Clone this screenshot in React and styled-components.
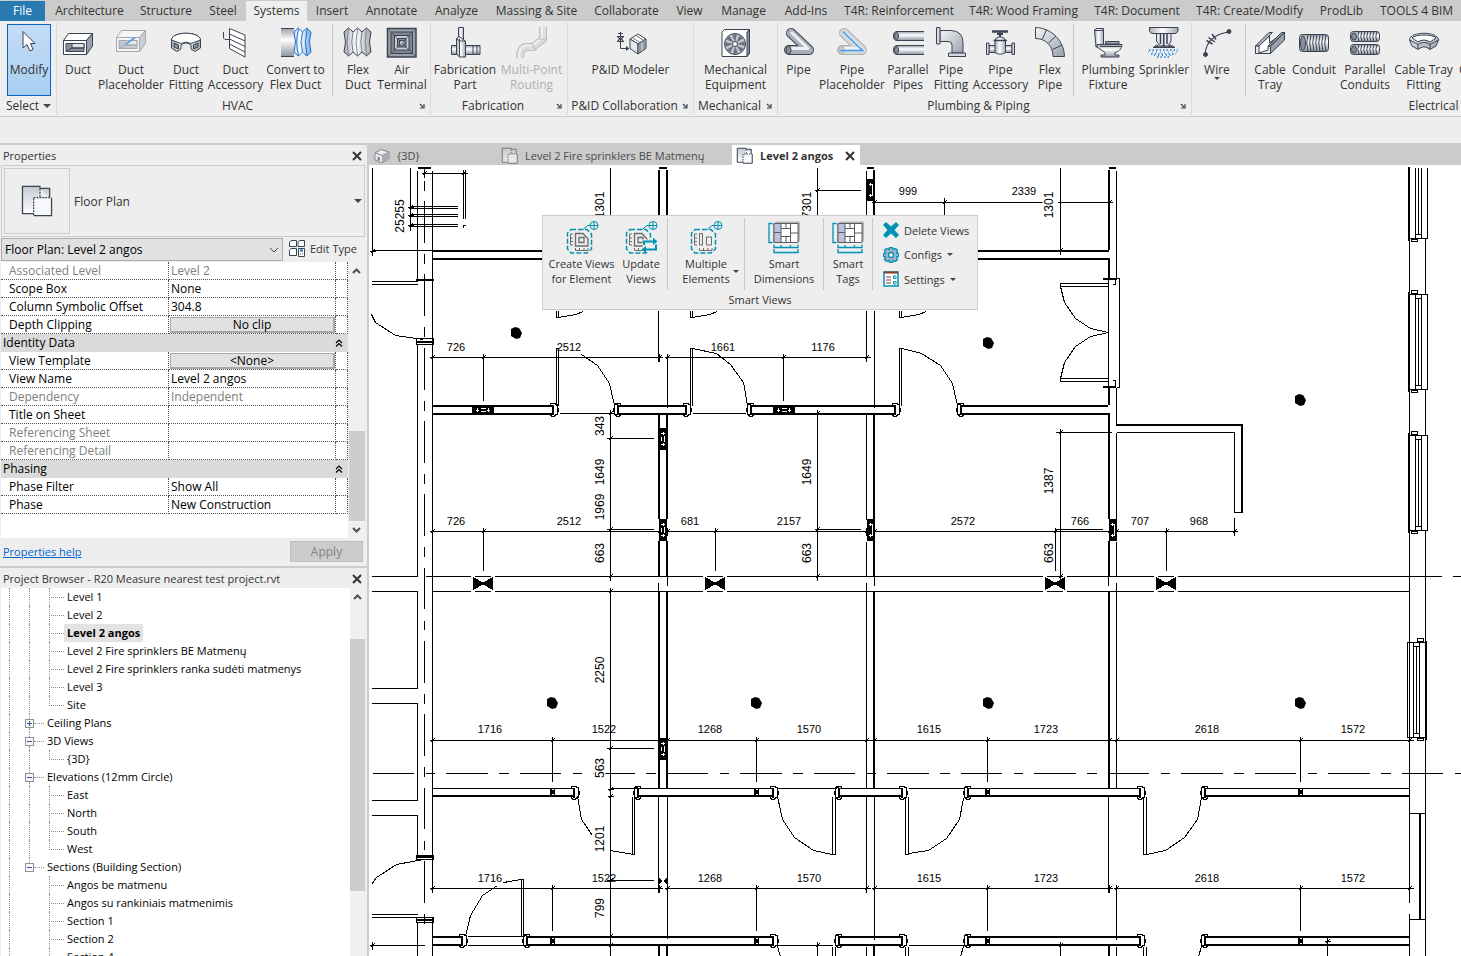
import React, { useState } from 'react';
import styled, { createGlobalStyle, css } from 'styled-components';

const theme = {
    font: '"Open Sans", "Noto Sans", sans-serif',
    chrome: '#eeeeee',
    strip: '#cbcbcb',
    line: '#cccccc',
    ink: '#3b4352',
    text: '#333333',
    muted: '#808080',
    teal: '#0092b3',
    blue: '#0a63c2',
}

const RIBBON_TABS = [
    { label: 'Architecture', width: 85 },
    { label: 'Structure', width: 68 },
    { label: 'Steel', width: 46 },
    { label: 'Systems', width: 61 },
    { label: 'Insert', width: 50 },
    { label: 'Annotate', width: 69 },
    { label: 'Analyze', width: 61 },
    { label: 'Massing & Site', width: 99 },
    { label: 'Collaborate', width: 81 },
    { label: 'View', width: 45 },
    { label: 'Manage', width: 63 },
    { label: 'Add-Ins', width: 62 },
    { label: 'T4R: Reinforcement', width: 124 },
    { label: 'T4R: Wood Framing', width: 125 },
    { label: 'T4R: Document', width: 102 },
    { label: 'T4R: Create/Modify', width: 123 },
    { label: 'ProdLib', width: 61 },
    { label: 'TOOLS 4 BIM', width: 89 },
]

const RIBBON_PANELS = [
    {
        title: 'HVAC',
        width: 374,
        tools: [
            { label: ['Duct'], icon: 'duct', width: 42 },
            { label: ['Duct', 'Placeholder'], icon: 'ductPlaceholder', width: 64 },
            { label: ['Duct', 'Fitting'], icon: 'ductFitting', width: 46 },
            { label: ['Duct', 'Accessory'], icon: 'ductAccessory', width: 53 },
            { label: ['Convert to', 'Flex Duct'], icon: 'convert', width: 67 },
            { separator: true },
            { label: ['Flex', 'Duct'], icon: 'flexDuct', width: 44 },
            { label: ['Air', 'Terminal'], icon: 'airTerminal', width: 44 },
        ],
    },
    {
        title: 'Fabrication',
        width: 137,
        tools: [
            { label: ['Fabrication', 'Part'], icon: 'fabrication', width: 68 },
            { label: ['Multi-Point', 'Routing'], icon: 'multiPoint', width: 65, disabled: true },
        ],
    },
    {
        title: 'P&ID Collaboration',
        width: 126,
        tools: [{ label: ['P&ID Modeler'], icon: 'pidModeler', width: 125 }],
    },
    {
        title: 'Mechanical',
        width: 84,
        tools: [{ label: ['Mechanical', 'Equipment'], icon: 'mechanical', width: 83 }],
    },
    {
        title: 'Plumbing & Piping',
        width: 414,
        tools: [
            { label: ['Pipe'], icon: 'pipe', width: 41 },
            { label: ['Pipe', 'Placeholder'], icon: 'pipePlaceholder', width: 66 },
            { label: ['Parallel', 'Pipes'], icon: 'parallelPipes', width: 46 },
            { label: ['Pipe', 'Fitting'], icon: 'pipeFitting', width: 40 },
            { label: ['Pipe', 'Accessory'], icon: 'pipeAccessory', width: 59 },
            { label: ['Flex', 'Pipe'], icon: 'flexPipe', width: 40 },
            { separator: true },
            { label: ['Plumbing', 'Fixture'], icon: 'plumbing', width: 62 },
            { label: ['Sprinkler'], icon: 'sprinkler', width: 50 },
        ],
    },
    {
        title: 'Electrical',
        width: 496,
        tools: [
            { label: ['Wire'], icon: 'wire', width: 50, menu: 'below' },
            { separator: true },
            { label: ['Cable', 'Tray'], icon: 'cableTray', width: 42 },
            { label: ['Conduit'], icon: 'conduit', width: 46 },
            { label: ['Parallel', 'Conduits'], icon: 'parallelConduits', width: 56 },
            { label: ['Cable Tray', 'Fitting'], icon: 'cableTrayFitting', width: 61 },
            { label: ['Conduit', 'Fitting'], icon: 'conduitFitting', width: 54 },
        ],
    },
]

const SMART_TOOLS = [
    { label: ['Create Views', 'for Element'], icon: 'createViews', width: 73 },
    { label: ['Update', 'Views'], icon: 'updateViews', width: 46 },
    { separator: true },
    { label: ['Multiple', 'Elements'], icon: 'multipleElements', width: 70, menu: 'side' },
    { separator: true },
    { label: ['Smart', 'Dimensions'], icon: 'smartGrid', width: 72 },
    { separator: true },
    { label: ['Smart', 'Tags'], icon: 'smartGrid', width: 42 },
    { separator: true },
]

const PROPERTIES = [
    { name: 'Associated Level', value: 'Level 2', readOnly: true },
    { name: 'Scope Box', value: 'None' },
    { name: 'Column Symbolic Offset', value: '304.8' },
    { name: 'Depth Clipping', value: 'No clip', button: true },
    { section: 'Identity Data' },
    { name: 'View Template', value: '<None>', button: true },
    { name: 'View Name', value: 'Level 2 angos' },
    { name: 'Dependency', value: 'Independent', readOnly: true },
    { name: 'Title on Sheet', value: '' },
    { name: 'Referencing Sheet', value: '', readOnly: true },
    { name: 'Referencing Detail', value: '', readOnly: true },
    { section: 'Phasing' },
    { name: 'Phase Filter', value: 'Show All' },
    { name: 'Phase', value: 'New Construction' },
]

const TREE = [
    { label: 'Level 1' },
    { label: 'Level 2' },
    { label: 'Level 2 angos', selected: true },
    { label: 'Level 2 Fire sprinklers BE Matmenų' },
    { label: 'Level 2 Fire sprinklers ranka sudėti matmenys' },
    { label: 'Level 3' },
    { label: 'Site', last: true },
    { label: 'Ceiling Plans', node: 'closed' },
    { label: '3D Views', node: 'open' },
    { label: '{3D}', last: true },
    { label: 'Elevations (12mm Circle)', node: 'open' },
    { label: 'East' },
    { label: 'North' },
    { label: 'South' },
    { label: 'West', last: true },
    { label: 'Sections (Building Section)', node: 'open', last: true },
    { label: 'Angos be matmenu', tail: true },
    { label: 'Angos su rankiniais matmenimis', tail: true },
    { label: 'Section 1', tail: true },
    { label: 'Section 2', tail: true },
    { label: 'Section 4', tail: true },
]

/* ---------- icons ---------- */

const Gradients = () => (
    <HiddenDefs aria-hidden="true">
        <defs>
            <linearGradient id="metalV" x1="0" y1="0" x2="0" y2="1">
                <stop offset="0" stopColor="#9ba1ac" />
                <stop offset=".4" stopColor="#ffffff" />
                <stop offset="1" stopColor="#8d94a1" />
            </linearGradient>
            <linearGradient id="metalH" x1="0" y1="0" x2="1" y2="0">
                <stop offset="0" stopColor="#a9aeb8" />
                <stop offset=".45" stopColor="#ffffff" />
                <stop offset="1" stopColor="#a2a8b3" />
            </linearGradient>
            <linearGradient id="fade" x1="0" y1="0" x2="0" y2="1">
                <stop offset="0" stopColor="#c3c8d2" />
                <stop offset="1" stopColor="#ffffff" />
            </linearGradient>
            <linearGradient id="steel" x1="0" y1="0" x2="1" y2="1">
                <stop offset="0" stopColor="#f4f5f7" />
                <stop offset="1" stopColor="#9aa1ad" />
            </linearGradient>
            <linearGradient id="blueH" x1="0" y1="0" x2="1" y2="0">
                <stop offset="0" stopColor="#cfe3fa" />
                <stop offset=".4" stopColor="#ffffff" />
                <stop offset="1" stopColor="#6fa9e6" />
            </linearGradient>
        </defs>
    </HiddenDefs>
)

const ductShape = (
    <>
        <path d="M1.5 13.5L6.5 6.5H30.5L24.5 13.5Z" fill="#fff" />
        <path d="M24.5 13.5L30.5 6.5V19L24.5 27.5Z" fill="#9aa1ad" />
        <path d="M1.5 13.5H24.5V27.5H1.5Z" fill="#fff" />
        <path d="M4 16.5H22V24.5H4Z" fill="#8a919d" />
        <path d="M10 16.5H22V21H10Z" fill="#dfe2e7" />
        <path d="M4 24.5L10 21H22" />
    </>
)

const pipeShape = (
    <>
        <path d="M8 6L26 23H6" stroke="#3b4352" strokeWidth="10" strokeLinejoin="round" strokeLinecap="round" />
        <path d="M8 6L26 23H6" stroke="#a9afba" strokeWidth="8" strokeLinejoin="round" strokeLinecap="round" />
        <path d="M8 5L25 21.5H8" stroke="#eef0f3" strokeWidth="3" strokeLinejoin="round" />
        <ellipse cx="5.5" cy="23" rx="2.5" ry="4" fill="#8a919d" />
    </>
)

const straightPipe = (y) => (
    <>
        <path d={`M32 ${y}H5Q1.5 ${y} 1.5 ${y + 4.5}T5 ${y + 9}H32`} fill="url(#metalV)" />
        <ellipse cx="4.5" cy={y + 4.5} rx="2" ry="3.5" fill="#8a919d" />
    </>
)

const coil = (y, h) => (
    <>
        <rect x="1.5" y={y} width="29" height={h} rx="3" fill="url(#metalV)" />
        <ellipse cx="5" cy={y + h / 2} rx="2.5" ry={h / 2 - 1.5} fill="#8a919d" />
        {[10, 13, 16, 19, 22, 25, 28].map((x) => (
            <path key={x} d={`M${x} ${y}q-2.5 ${h / 2} 0 ${h}`} />
        ))}
    </>
)

const viewFrame = (
    <>
        <path d="M5 8.5H21L25.5 13V28L21 32H5L1.5 28V12Z" stroke={theme.teal} strokeWidth="1.5" strokeDasharray="5 2" />
        <path d="M17 8.5L22 4.5H24" stroke={theme.teal} />
        <circle cx="28" cy="4.5" r="4" stroke={theme.teal} />
        <path d="M24 4.5H32M28 .5V8.5" stroke={theme.teal} />
    </>
)

const ladder = (
    <g stroke="#6b6b6b">
        <path d="M7 13H4.5V24H7M4.5 17H7M4.5 20.5H7" />
        <path d="M9.5 27V29.5H22V27M13.5 27V29.5M18 27V29.5" />
    </g>
)

const room = (
    <g stroke="#6b6b6b" strokeWidth="1.3">
        <path d="M9.5 12.5H17L22 18V25H9.5Z" />
        <path d="M13 16.5H18V21.5H13Z" />
    </g>
)

const zigzag = (x, n, w) => {
    let top = ''
    let bottom = ''
    for (let i = 1; i <= n; i++) {
        top += `l${w / 2} -4l${w / 2} 4`
        bottom += `l${-w / 2} 4l${-w / 2} -4`
    }
    return `M${x} 5${top}q-3 10 0 20${bottom}q3 -10 0 -20Z`
}

const ICONS = {
    duct: ductShape,
    ductPlaceholder: (
        <g transform="translate(0 -3)">
            <g opacity=".4">{ductShape}</g>
            <path d="M11 20L20 13.5" stroke="#58a6ee" strokeWidth="2" />
        </g>
    ),
    ductFitting: (
        <>
            <path d="M1.5 13C2 4 30 4 30.5 13V21L25 24.5L21 22V18Q16 14 11 18V22L7 24.5L1.5 21Z" fill="url(#metalH)" />
            <path d="M1.5 13C2 4 30 4 30.5 13L21 16.5Q16 13.5 11 16.5Z" fill="#fff" />
            <path d="M4 16L8.5 18V22L4 20Z" fill="#8a919d" />
            <path d="M28 16L23.5 18V22L28 20Z" fill="#8a919d" />
        </>
    ),
    ductAccessory: (
        <>
            <path d="M9.5 1.5L25 8V30L9.5 21.5Z" fill="#fff" />
            <path d="M9.5 7L25 14M9.5 12L25 19.5M9.5 17L25 25M3.5 5V11L5 12.5H9" />
        </>
    ),
    convert: (
        <>
            <path d="M1 1.5H14V29.5H1Z" fill="url(#metalV)" stroke="none" />
            <path d="M14 1.5H1M1 29.5H14" />
            <g stroke="#1d6fc9">
                <path d={zigzag(14, 2, 8.5)} fill="url(#blueH)" />
                <path d="M18.5 2Q15 15 18.5 29M22.5 5Q19.5 15 22.5 25M27 2Q24 15 27 29" />
            </g>
        </>
    ),
    flexDuct: (
        <>
            <path d={zigzag(2, 3, 9)} fill="url(#metalH)" />
            <path d="M6.5 2Q3.5 15 6.5 29M11 5Q8.5 15 11 25M15.5 2Q12.5 15 15.5 29M20 5Q17.5 15 20 25M24.5 2Q22 15 24.5 29" stroke="#7a818e" />
        </>
    ),
    airTerminal: (
        <>
            <path d="M1.5 1.5H30V30H1.5Z" fill="#9aa1ad" strokeWidth="1.5" />
            <path d="M5 5H26.5V26.5H5Z" fill="#7d8592" />
            <path d="M8.5 8.5H23V23H8.5Z" fill="#c9cdd4" />
            <path d="M11.5 11.5H20V20H11.5Z" fill="#8a919d" />
            <path d="M13.5 13.5H18V18H13.5Z" fill="#fff" />
            <path d="M1.5 1.5L30 30M30 1.5L1.5 30" strokeWidth=".7" />
        </>
    ),
    fabrication: (
        <>
            <path d="M2.5 18.5H31V27.5H2.5Z" fill="url(#metalV)" />
            <path d="M9.5 .5H14.5V20H9.5Z" fill="url(#metalH)" />
            <path d="M7.5 11.5L10 9.5L16.5 14V30H10.5L7.5 27Z" fill="url(#metalH)" />
            <path d="M10.5 12V30M24 18.5V27.5M28 18.5V27.5M7.5 11.5L10.5 14H16" />
        </>
    ),
    multiPoint: (
        <g strokeLinejoin="round">
            <path d="M27 0V12L17 20H10Q4 21 4 31" stroke="#bdbdbd" strokeWidth="8" />
            <path d="M27 0V12L17 20H10Q4 21 4 31" stroke="#dcdcdc" strokeWidth="6" />
            <path d="M26 0V11L16 18.5H9Q3 20 3 31" stroke="#efefef" strokeWidth="2" />
            <path d="M23 12L31 13M16 16L20 24" stroke="#bdbdbd" />
        </g>
    ),
    pidModeler: (
        <>
            <path d="M5.5 5V21.5H12M2 9.5L9 14.5H2L9 9.5ZM3 6.5H8M3 12H8" />
            <path d="M11 19L14.5 21.5L11 24Z" fill="#3b4352" stroke="none" />
            <path d="M15 12L23 7L31 12L23 17Z" fill="#fff" />
            <path d="M15 12L23 17V27L15 21.5Z" fill="#e6e8ec" />
            <path d="M31 12L23 17V27L31 21.5Z" fill="#b9bec8" />
            <path d="M17 10.5L25 15.5V26M21 8.5L29 13.5V23" stroke="#6b7280" />
        </>
    ),
    mechanical: (
        <>
            <path d="M2 5L4.5 2.5H29.5V26L27 29.5H2Z" fill="#fff" />
            <path d="M27 5V29.5L29.5 26V2.5Z" fill="#8a919d" />
            <circle cx="15" cy="17" r="10.5" fill="#c3c8d0" />
            {[0, 45, 90, 135, 180, 225, 270, 315].map((a) => (
                <path key={a} d="M15 15L12 7.5L17 7Z" fill="#6c7482" stroke="none" transform={`rotate(${a} 15 17)`} />
            ))}
            <circle cx="15" cy="17" r="2.5" fill="#fff" />
        </>
    ),
    pipe: pipeShape,
    pipePlaceholder: (
        <>
            <g opacity=".35">{pipeShape}</g>
            <path d="M7 4.5L26.5 23.5H4" stroke="#3f9bf0" strokeWidth="1.5" />
        </>
    ),
    parallelPipes: <>{straightPipe(4.5)}{straightPipe(18.5)}</>,
    pipeFitting: (
        <>
            <path d="M5 3.5H16Q28 4 28 16V26H17V18Q17 14.5 13 14.5H5Z" fill="url(#steel)" />
            <path d="M1.5 .5H5V17H1.5Z" fill="#d5d8de" />
            <path d="M13.5 26H30.5V29.5H13.5Z" fill="#d5d8de" />
        </>
    ),
    pipeAccessory: (
        <>
            <path d="M7 4.5H23" strokeWidth="2.5" />
            <path d="M15 5V10M12 7H18" strokeWidth="2" />
            <path d="M4 18.5H27V25.5H4Z" fill="url(#metalV)" />
            <path d="M10 25.5V14Q10 10 15 10T20.5 14V25.5Q15 29 10 25.5Z" fill="url(#metalH)" />
            <path d="M8.5 13.5H22" strokeWidth="1.5" />
            <path d="M1.5 16H4V27.5H1.5ZM27 16H29.5V27.5H27Z" fill="#d5d8de" />
        </>
    ),
    flexPipe: (
        <>
            <path d="M1.5 .5C18 1 30 14 30.5 29.5H19C19 19 12 11.5 1.5 11.5Z" fill="url(#steel)" />
            <path d="M12.5 2.5L8.5 12M22 9L14.5 16M28 18L18.5 22.5" />
        </>
    ),
    plumbing: (
        <>
            <path d="M2.5 3L4 1.5H11.5V20H4Z" fill="url(#metalH)" />
            <path d="M2.5 3.5H11.5" />
            <path d="M13.5 14.5H27V17H13.5Z" fill="#9aa1ad" />
            <path d="M5 17.5H30C30 22 26 25 23 25.5V28H27V30H9V28H13V25.5L5 20Z" fill="url(#metalV)" />
            <path d="M8 19.5H29" />
        </>
    ),
    sprinkler: (
        <>
            <path d="M1.5 .5H30V4L28 6.5H3.5L1.5 4Z" fill="url(#metalH)" />
            <path d="M8.5 6.5H23V14L20 19H12L8.5 14Z" fill="#e6e8ec" />
            <path d="M12.5 6.5V17M19 6.5V17M15.75 6.5V19" strokeWidth="1.5" />
            <path d="M5 20.5L9 18L12 20.5L15.5 18L19 20.5L22.5 18L27 20.5Z" fill="#5c6472" />
            <path d="M1 23L30 23M3 27H28M9 30H23" stroke="#1d7fe0" strokeWidth="1.5" strokeDasharray="1.5 2" />
            <path d="M0 25H32M6 28.5H26" stroke="#1d7fe0" strokeDasharray="1 3" />
        </>
    ),
    wire: (
        <>
            <path d="M4 27Q6 8 28 5" stroke="#3b4352" strokeWidth="1.2" />
            <circle cx="4.5" cy="27.5" r="2" fill="#3b4352" />
            <circle cx="28" cy="4.5" r="2" fill="#3b4352" />
            <path d="M5.5 13.5L11.5 17M7.5 10.5L14 15M11 7L15 12.5" strokeWidth="1.5" />
        </>
    ),
    cableTray: (
        <>
            <path d="M1.5 19L15 5.5H18.5L5 19V26.5Z" fill="#b3b9c3" />
            <path d="M5 19L15.5 9V16L26 8L14 26.5H1.5V19H5Z" fill="#fff" />
            <path d="M1.5 19V26.5H16.5V19H14V23L5 26V19Z" fill="#e6e8ec" />
            <path d="M14 19L27.5 5.5H30.5L16.5 19ZM16.5 19L30.5 5.5V13L16.5 26.5Z" fill="#9aa1ad" />
        </>
    ),
    conduit: coil(7.5, 17),
    parallelConduits: <>{coil(4.5, 10)}{coil(17.5, 10)}</>,
    cableTrayFitting: (
        <>
            <path d="M1.5 13C2 4 30 4 30.5 13L28 19L22 22.5Q16 17 10 22.5L4 19Z" fill="url(#steel)" />
            <path d="M4 11C7 7 25 7 28 11L22 15Q16 11 10 15Z" fill="#fff" />
            <path d="M1.5 13L10 17.5Q16 13.5 22 17.5L30.5 13M10 17.5V22M22 17.5V22" />
        </>
    ),
    conduitFitting: <path d="M10 6.5H30V22H10Z" fill="url(#steel)" />,
    createViews: <>{viewFrame}{ladder}{room}</>,
    updateViews: (
        <>
            {viewFrame}{ladder}{room}
            <path d="M17.5 18.5H33V31H17.5Z" fill="#eee" stroke="none" />
            <path d="M19 24V20.5H30M31 23.5V28.5H19" stroke={theme.teal} strokeWidth="2" />
            <path d="M28 16.5L32.5 20.5L28 24ZM21 25L16.5 28.5L21 32Z" fill={theme.teal} stroke="none" />
        </>
    ),
    multipleElements: (
        <>
            {viewFrame}{ladder}
            <path d="M9.5 12.5H12.5V24H9.5ZM16.5 16H21.5V24H16.5Z" stroke="#6b6b6b" />
        </>
    ),
    smartGrid: (
        <>
            <path d="M6 2.5L8 .5H32V20L30 21.5Z" fill="#b5b5b5" stroke="none" />
            <path d="M6 2.5H30V21.5H6Z" fill="#fff" stroke="#5c5c5c" />
            <path d="M6 2.5H13V21.5H6Z" fill="#b9c4e0" stroke="#5c5c5c" />
            <path d="M13 7.5H22.5M6 11.5H13M13 15.5H22.5V2.5M22.5 12H30M18 2.5V7.5M18 15.5V21.5M22.5 15.5V21.5" stroke="#5c5c5c" />
            <path d="M4.5 2.5H1V21.5H4.5M6 23.5V26.5H30V23.5M13 24V26.5M22.5 24V26.5M6 28V31.5H30V28" stroke={theme.teal} strokeWidth="1.3" />
        </>
    ),
}

const Icon = ({ name }) => (
    <IconSvg viewBox="0 0 32 32" aria-hidden="true">{ICONS[name]}</IconSvg>
)

const CloseGlyph = () => (
    <Glyph viewBox="0 0 12 12" $size={12} aria-hidden="true">
        <path d="M2 2L10 10M10 2L2 10" stroke="#333" strokeWidth="2" fill="none" />
    </Glyph>
)

const Launcher = () => (
    <Glyph viewBox="0 0 6 6" $size={6} aria-hidden="true">
        <path d="M1 1L4 4M5 1V5H1" stroke="#3b4352" strokeWidth="1.2" fill="none" />
    </Glyph>
)

const PlanGlyph = ({ size, faded }) => (
    <Glyph viewBox="0 0 32 32" $size={size} aria-hidden="true" opacity={faded ? 0.6 : 1}>
        <g stroke={theme.ink} strokeWidth={size > 20 ? 1.3 : 2}>
            <path d="M18.5 2.5H28.5V12M18.5 2.5V.5H.5V28.5H12" fill="url(#fade)" />
            <path d="M12 12H30.5V30.5H12Z" fill="#f7f8fa" stroke="none" />
            <path d="M30.5 12V30.5H12" fill="none" />
            <path d="M12 30V12H30M18.5 3V12" fill="none" strokeDasharray={size > 20 ? '2 1' : '3 2'} />
        </g>
    </Glyph>
)

const CubeGlyph = () => (
    <Glyph viewBox="0 0 16 16" $size={16} aria-hidden="true">
        <path d="M1 5L7 1.5L15 4V11L8 15L1 12Z" fill="#e9eaec" stroke="#85898f" />
        <path d="M1 5L8.5 7.5L15 4M8.5 7.5V15" fill="none" stroke="#85898f" />
        <path d="M8.5 7.5L15 4V11L8 15Z" fill="#a9adb5" />
        <path d="M3.5 8.5L6 9.500V13L3.5 12Z" fill="#85898f" />
    </Glyph>
)

const EditTypeGlyph = () => (
    <Glyph viewBox="0 0 17 17" $size={17} aria-hidden="true">
        <g fill="#fff" stroke={theme.ink}>
            <path d="M.5 2.5L2 .5H7.5V6.5H.5ZM9 2.5L10.5 .5H15.5V6.5H9ZM.5 10.5L2 8.5H7.5V15.5H.5Z" />
            <path d="M9.5 8.5H15.5V16.5H9.5Z" />
            <path d="M11 10.5H14" stroke={theme.blue} strokeWidth="2" />
            <path d="M11 14H12M13 14H14" />
        </g>
    </Glyph>
)

const MENU_ICONS = {
    'Delete Views': <path d="M0 3L3 0L8 4.5L13 0L16 3L11.5 8L16 13L13 16L8 11.5L3 16L0 13L4.5 8Z" fill={theme.teal} />,
    Configs: (
        <>
            <path d="M6.5 .5H9.5L10 2.5L12.5 1.5L14.5 3.5L13.5 6L15.5 6.5V9.5L13.5 10L14.5 12.5L12.5 14.5L10 13.5L9.5 15.5H6.5L6 13.5L3.5 14.5L1.5 12.5L2.5 10L.5 9.5V6.5L2.5 6L1.5 3.5L3.5 1.5L6 2.5Z" fill="#9fb0cf" stroke={theme.teal} strokeWidth="1.3" />
            <circle cx="8" cy="8" r="2.5" fill="#eee" stroke={theme.teal} strokeWidth="1.3" />
        </>
    ),
    Settings: (
        <>
            <path d="M1 1H15V15H1Z" fill="#fff" stroke={theme.teal} strokeWidth="1.5" />
            <path d="M1 1.5H15" stroke="#8a3b2a" strokeWidth="2" />
            <path d="M3 6H8M3 9H8M3 12H8" stroke="#8a3b2a" strokeWidth="1.2" />
            <path d="M10.5 5H13V7.5H10.5ZM10.5 10.5H13V13H10.5Z" fill="none" stroke={theme.teal} />
        </>
    ),
}

/* ---------- ribbon ---------- */

const ToolButton = ({ tool }) => (
    <ToolButtonStyled type="button" disabled={tool.disabled} $width={tool.width}>
        <Icon name={tool.icon} />
        <ToolLabel>
            <span>
                {tool.label.map((line) => <ToolLine key={line}>{line}</ToolLine>)}
            </span>
            {tool.menu === 'side' && <SideArrow $size={3} />}
        </ToolLabel>
        {tool.menu === 'below' && <Arrow $size={3} />}
    </ToolButtonStyled>
)

const Tools = ({ tools }) => tools.map((tool, index) => (
    tool.separator
        ? <Separator key={index} />
        : <ToolButton key={index} tool={tool} />
))

const Ribbon = () => (
    <RibbonStyled>
        <Panel $width={57}>
            <PanelBody $centered>
                <ModifyButton type="button">
                    <IconSvg viewBox="0 0 32 32" aria-hidden="true">
                        <path d="M10 4.5V21L14 17.5L17 24L20 22.5L17.5 16.5H22Z" fill="#fff" />
                    </IconSvg>
                    <ToolLabel><ToolLine>Modify</ToolLine></ToolLabel>
                </ModifyButton>
            </PanelBody>
            <SelectMenu type="button">Select<Arrow $size={4} /></SelectMenu>
        </Panel>
        {RIBBON_PANELS.map((panel) => (
            <Panel key={panel.title} $width={panel.width}>
                <PanelBody><Tools tools={panel.tools} /></PanelBody>
                <PanelTitle>
                    <span>{panel.title}</span>
                    <LauncherButton type="button" aria-label={`${panel.title} settings`}><Launcher /></LauncherButton>
                </PanelTitle>
            </Panel>
        ))}
    </RibbonStyled>
)

/* ---------- side panels ---------- */

const Scrollbar = ({ before, size, after, down }) => (
    <ScrollbarStyled aria-hidden="true">
        <ScrollArrow viewBox="0 0 15 17"><path d="M4 11L7.5 7.5L11 11" /></ScrollArrow>
        <Track $grow={before} />
        <Thumb $grow={size} />
        <Track $grow={after} />
        {down && <ScrollArrow viewBox="0 0 15 17"><path d="M4 7L7.5 10.5L11 7" /></ScrollArrow>}
    </ScrollbarStyled>
)

const PropertyRow = ({ row }) => {
    if (row.section) {
        return (
            <tr>
                <SectionCell colSpan="3" scope="colgroup">
                    <SectionInner>
                        {row.section}
                        <CollapseButton type="button" aria-label={`Collapse ${row.section}`}>
                            <svg viewBox="0 0 8 8" width="8" height="8">
                                <path d="M1 4L4 1L7 4M1 7.5L4 4.5L7 7.5" fill="none" stroke="#000" strokeWidth="1.2" />
                            </svg>
                        </CollapseButton>
                    </SectionInner>
                </SectionCell>
            </tr>
        )
    }
    return (
        <PropertyRowStyled $readOnly={row.readOnly}>
            <th scope="row">{row.name}</th>
            <td>{row.button ? <ValueButton type="button">{row.value}</ValueButton> : row.value}</td>
            <td />
        </PropertyRowStyled>
    )
}

const PropertiesPanel = () => (
    <section>
        <TitleBar>
            Properties
            <CloseButton type="button" aria-label="Close properties"><CloseGlyph /></CloseButton>
        </TitleBar>
        <TypeSelector type="button">
            <Thumbnail><PlanGlyph size={31} /></Thumbnail>
            <span>Floor Plan</span>
            <Arrow $size={4} />
        </TypeSelector>
        <InstanceRow>
            <SelectBox>
                <select aria-label="Instance" defaultValue="angos">
                    <option value="angos">Floor Plan: Level 2 angos</option>
                </select>
                <svg viewBox="0 0 10 6" width="10" height="6" aria-hidden="true">
                    <path d="M1 1L5 5L9 1" fill="none" stroke="#444" />
                </svg>
            </SelectBox>
            <EditType type="button"><EditTypeGlyph />Edit Type</EditType>
        </InstanceRow>
        <TableArea>
            <div>
                <PropertyTable>
                    <colgroup><col className="name" /><col className="value" /><col className="flag" /></colgroup>
                    <tbody>
                        {PROPERTIES.map((row) => <PropertyRow key={row.section || row.name} row={row} />)}
                    </tbody>
                </PropertyTable>
            </div>
            <Scrollbar before={152} size={90} after={0} down />
        </TableArea>
        <PanelFooter>
            <a href="#help">Properties help</a>
            <ApplyButton type="button" disabled>Apply</ApplyButton>
        </PanelFooter>
    </section>
)

const TreeItem = ({ item }) => (
    <TreeRow>
        <Rail $width={item.node ? 16 : 20} $line />
        {item.node
            ? (
                <>
                    <NodeMark>
                        <Stem $on />
                        <Expander type="button" aria-label={`Toggle ${item.label}`}>
                            <svg viewBox="0 0 9 9" width="9" height="9">
                                <rect x=".5" y=".5" width="8" height="8" fill="#f6f6f6" stroke="#919191" />
                                <path d={item.node === 'closed' ? 'M2 4.5H7M4.5 2V7' : 'M2 4.5H7'} stroke="#3a559f" />
                            </svg>
                        </Expander>
                        <Stem $on={!item.last} />
                    </NodeMark>
                    <Dash $width={10} />
                    <TreeLabel>{item.label}</TreeLabel>
                </>
            )
            : (
                <>
                    <Rail $width={20} $line={!item.tail} />
                    <Rail $width={2} $line $half={item.last} />
                    <Dash $width={13} />
                    <TreeLabel $selected={item.selected}>{item.label}</TreeLabel>
                </>
            )}
    </TreeRow>
)

const ProjectBrowser = () => (
    <BrowserSection>
        <TitleBar>
            Project Browser - R20 Measure nearest test project.rvt
            <CloseButton type="button" aria-label="Close project browser"><CloseGlyph /></CloseButton>
        </TitleBar>
        <TreeArea>
            <Tree>
                {TREE.map((item) => <TreeItem key={item.label} item={item} />)}
            </Tree>
            <Scrollbar before={34} size={252} after={65} />
        </TreeArea>
    </BrowserSection>
)

/* ---------- drawing ---------- */

// x, y, width, height of every solid wall face
const WALL_FACES = [
    [418, 167, 13, 2], [659, 167, 8, 2], [867, 167, 7, 2], [1109, 167, 7, 2],
    [432, 250, 677, 2], [432, 258, 677, 2],
    // column 1
    [658, 170, 2, 80], [666, 170, 2, 80], [658, 413, 2, 106], [666, 413, 2, 106],
    [658, 541, 2, 35], [666, 541, 2, 35], [658, 591, 2, 197], [666, 591, 2, 197],
    [658, 946, 2, 10], [666, 946, 2, 10],
    // column 2
    [873, 170, 2, 80], [873, 413, 2, 106], [873, 541, 2, 35], [873, 591, 2, 197], [873, 946, 2, 10],
    // column 3
    [1108, 170, 2, 80], [1108, 258, 2, 20], [1108, 387, 2, 18], [1108, 413, 2, 106],
    [1108, 541, 2, 35], [1108, 591, 2, 197], [1108, 946, 2, 10],
    // niche
    [1116, 424, 127, 2], [1241, 424, 2, 89],
    // outer wall
    [1408, 167, 2, 74], [1408, 292, 2, 100], [1408, 433, 2, 100], [1419, 813, 2, 106],
    // left openings
    [416, 279, 18, 2], [416, 341, 18, 2], [416, 856, 18, 2], [416, 919, 18, 2],
    [1103, 278, 13, 2], [1103, 386, 13, 2],
]

const THIN_LINES = [
    // left wing
    'M372 167V254M372 250H432M410 167V230M417 170V278M432 170V892M432 917V956',
    'M421 173H467M463 169V218M465 169V218M410 206H457M410 208H457M410 214H457M410 216H457M410 224H457M410 226H457',
    'M371 281H417M371 284H417M416 338H433V344H416ZM417 344V576H371M371 591H417V688H371M371 703H417V800H371',
    'M371 815H417V855M416 855H433V859H416ZM371 914H417M371 917H417M416 917H433V922H416ZM417 921V956M371 945H424',
    'M462 225H465M463 224V227',
    // columns
    'M658 310V361M667 354V407M658 582V591M667 576V585M658 795V892M667 795V938',
    'M866 170V250M866 310V361M874 310V407M866 413V519M866 541V576M866 582V788M874 576V585M866 795V892M874 795V939M866 946V956',
    'M1116 170V279M1116 387V425M1116 432V519M1116 541V576M1108 576V585M1116 582V788M1108 279V387M1108 795V892M1116 884V939M1116 946V956',
    'M1116 278H1119V387H1116M1112 284H1115V279M1112 380H1115V386',
    'M1116 432H1234V512H1242',
    // corridor
    'M425 576H1441M1452 576H1461M432 591H1409',
    // outer wall
    'M1409 238V294M1425 238V294M1409 389V435M1425 389V435M1409 530V902M1409 913V956M1425 530V642M1425 737V956',
    'M1409 813H1425M1409 919H1425',
    'M1415 167V238M1418 167V234M1421 167V238M1427 167V238H1409M1415 234H1421M1411 239H1417V241H1411Z',
    'M1409 294H1427V389H1409M1415 294V389M1421 294V389M1418 298V385M1415 298H1421M1415 385H1421M1411 290H1417V293H1411ZM1411 390H1417V392H1411Z',
    'M1409 435H1427V530H1409M1415 435V530M1421 435V530M1418 439V526M1415 439H1421M1415 526H1421M1411 431H1417V434H1411ZM1411 531H1417V533H1411Z',
    'M1407 642H1425V737H1407ZM1426 640V739M1413 642V737M1419 642V737M1416 646V733M1413 646H1419M1413 733H1419M1417 638H1423V641H1417ZM1417 738H1423V740H1417Z',
    // between wall ends
    'M559 413H610M692 413H745M777 788H836M908 788H964M610 788H636M467 936H524M467 945H524M777 945H832M908 945H964',
    // door leaves
    'M556 405V348H558V405M690 405V348H692V405M899 405V348H901V405M556 310V317H558V310M690 310V317H692V310M899 310V317H901V310',
    'M632 796V854H634V796M832 796V854H835V796M905 796V854H908V796M1143 796V854H1146V796M521 936V879H523V936',
    'M832 946V956M835 946V956M905 946V956M908 946V956M1143 946V956M1146 946V956',
    'M1108 283H1060V286H1108M1108 378H1060V381H1108',
    // dimension lines
    'M874 202H1042M1057 202H1112M944 197V215M814 190H860',
    'M429 357H661M664 357H870M483 353V400M783 353V400',
    'M429 531H662M668 531H866M874 531H1108M1116 531H1237M483 527V570M715 527V570M1055 527V570M1166 527V570M1234 517V535',
    'M429 740H1413M552 736V781M756 736V781M987 736V781M1300 736V781',
    'M429 888H662M664 888H870M872 888H1112M1114 888H1413M552 884V930M756 884V930M987 884V930M1300 884V930',
    'M610 167V216M610 410V577M610 588V956M606 438H653M606 529H653M606 748H653M606 880H653',
    'M817 167V216M817 413V577M817 529H860M817 943V956M1060 167V254M1060 432V577M1055 432H1111M1055 529H1102M1060 943V956M1327 938V956',
]

const DOOR_ARCS = [
    'M371 314L375 322L395 335L423 339',
    'M371 884L376 877L396 864L423 859',
    'M581 354L597 365L609 383L614 405',
    'M692 348L716 353L730 364L743 382L747 405',
    'M902 348L921 353L940 365L952 383L957 405',
    'M558 317L575 314L583 311M692 317L709 314L717 311M901 317L918 314L926 311',
    'M577 796L581 819L592 835M610 850L633 854',
    'M777 796L782 819L794 837L813 850L832 854',
    'M963 798L959 819L946 838L928 850L908 853',
    'M1201 797L1197 819L1184 837L1165 850L1146 854',
    'M465 936L470 915L482 895L497 885M503 882L521 879',
    'M1060 286L1064 302L1075 318L1090 328L1108 332L1090 336L1075 346L1064 362L1060 378',
    'M777 946L780 956M963 946L960 956M1201 946L1198 956',
]

// x1, x2, y of top face, end caps
const CROSS_WALLS = [
    { y: 405, runs: [[432, 554, 'r'], [617, 687, 'lr'], [750, 896, 'lr'], [960, 1108, 'l']], topWeight: 2 },
    { y: 788, runs: [[432, 575, 'r'], [637, 774, 'lr'], [838, 903, 'lr'], [967, 1141, 'lr'], [1204, 1409, 'l']], topWeight: 1 },
    { y: 936, runs: [[432, 463, 'r'], [526, 774, 'lr'], [838, 903, 'lr'], [967, 1141, 'lr'], [1204, 1409, 'l']], topWeight: 2 },
]

const TICKS = [
    [424, 173], [463, 173], [410, 207], [410, 215], [410, 225], [372, 251], [372, 945],
    [817, 190], [874, 202], [944, 202], [1109, 202], [1060, 250],
    ...[432, 483, 659, 667, 783, 866].map((x) => [x, 357]),
    ...[432, 483, 659, 667, 715, 866, 874, 1055, 1109, 1116, 1166, 1234].map((x) => [x, 531]),
    ...[740, 888].flatMap((y) => [432, 552, 659, 667, 756, 866, 874, 987, 1109, 1116, 1300, 1409].map((x) => [x, y])),
    ...[413, 438, 529, 576, 591, 748, 789, 796, 880, 936, 945].map((y) => [610, y]),
    [817, 413], [817, 529], [817, 576], [817, 945], [1060, 432], [1060, 576], [1060, 945], [1327, 941],
]

const DIMENSIONS = [
    [908, 191, '999'], [1024, 191, '2339'],
    [456, 347, '726'], [569, 347, '2512'], [723, 347, '1661'], [823, 347, '1176'],
    [456, 521, '726'], [569, 521, '2512'], [690, 521, '681'], [789, 521, '2157'],
    [963, 521, '2572'], [1080, 521, '766'], [1140, 521, '707'], [1199, 521, '968'],
    ...[729, 878].flatMap((y) => [
        [490, y, '1716'], [604, y, '1522'], [710, y, '1268'], [809, y, '1570'],
        [929, y, '1615'], [1046, y, '1723'], [1207, y, '2618'], [1353, y, '1572'],
    ]),
]

const VERTICAL_DIMENSIONS = [
    [400, 216, '25255'],
    [600, 205, '1301'], [807, 205, '7301'], [1049, 205, '1301'],
    [600, 426, '343'], [600, 472, '1649'], [600, 507, '1969'], [600, 553, '663'],
    [600, 670, '2250'], [600, 768, '563'], [600, 839, '1201'], [600, 908, '799'],
    [807, 472, '1649'], [807, 553, '663'], [1049, 481, '1387'], [1049, 553, '663'],
]

const SPRINKLERS = [[516, 333], [988, 343], [1300, 400], [552, 703], [756, 703], [988, 703], [1300, 703]]

const WallEnd = ({ x, y, side }) => {
    const out = side === 'r' ? 1 : -1
    return (
        <g>
            <rect x={side === 'r' ? x - 2 : x} y={y} width="2" height="10" />
            <path
                d={`M${x + 0.5} ${y - 0.5}h${3 * out}v10h${-3 * out}M${x - 3.5 * out} ${y - 0.5}v-1h${5 * out}v1M${x - 3.5 * out} ${y + 9.5}l${out} 2h${3 * out}l${out} -2`}
                fill="none"
                stroke="#000"
            />
            <rect x={x + 4 * out} y={y + 3} width="1" height="4" />
        </g>
    )
}

const Damper = ({ x, y, vertical }) => (
    <g transform={`translate(${x} ${y})${vertical ? ' rotate(90)' : ''}`}>
        <rect x="-11" y="-4" width="22" height="8" />
        <path d="M-6 -2H6V2H-6Z" fill="#fff" />
        <path d="M-5 -2L0 -1L5 -2V2L0 1L-5 2Z" />
        <path d="M-7 0H-4M4 0H7" stroke="#fff" />
    </g>
)

const Valve = ({ x }) => (
    <g transform={`translate(${x} 583.5)`}>
        <rect x="-12" y="-8" width="4" height="17" fill="#fff" />
        <rect x="8" y="-8" width="4" height="17" fill="#fff" />
        <path d="M-10 -6.5L0 -1L10 -6.5V6.5L0 1L-10 6.5Z" />
    </g>
)

const FloorPlan = () => (
    <PlanSvg viewBox="369 165 1092 791" role="img" aria-label="Level 2 angos floor plan">
        <g shapeRendering="crispEdges">
            <g transform="translate(.5 .5)" fill="none" stroke="#000">
                {THIN_LINES.map((d) => <path key={d} d={d} />)}
                <path d="M424 167V924" strokeDasharray="41.8 11.2 9.8 10.5" strokeDashoffset="39.7" />
                <path d="M372 773H1461" strokeDasharray="41.8 11.2 9.8 10.7" />
                {DOOR_ARCS.map((d) => <path key={d} d={d} />)}
                {TICKS.map(([x, y]) => (
                    <path key={`${x}-${y}`} d={`M${x - 2} ${y + 2}L${x + 2} ${y - 2}M${x} ${y - 4}V${y + 4}M${x - 3} ${y}H${x + 3}`} />
                ))}
            </g>
            {WALL_FACES.map(([x, y, w, h]) => <rect key={`${x}-${y}`} x={x} y={y} width={w} height={h} />)}
            {CROSS_WALLS.map(({ y, runs, topWeight }) => runs.map(([x1, x2, ends]) => (
                <g key={`${x1}-${y}`}>
                    <rect x={x1} y={y} width={x2 - x1} height={topWeight} />
                    <rect x={x1} y={y === 788 ? 795 : y + 8} width={x2 - x1} height="2" />
                    {ends.includes('l') && <WallEnd x={x1} y={y} side="l" />}
                    {ends.includes('r') && <WallEnd x={x2} y={y} side="r" />}
                </g>
            )))}
            {[552, 756, 987, 1300].map((x) => [792, 941].map((y) => (
                <g key={`${x}-${y}`}>
                    <rect x={x - 2} y={y - 4} width="5" height="8" />
                    <path d={`M${x} ${y - 3}h2l-1 2zM${x} ${y + 3}h2l-1 -2z`} fill="#fff" />
                </g>
            )))}
            <Damper x={483} y={410} />
            <Damper x={784} y={410} />
            <Damper x={663} y={439} vertical />
            <Damper x={663} y={530} vertical />
            <Damper x={663} y={749} vertical />
            <Damper x={870.5} y={190} vertical />
            <Damper x={870.5} y={530} vertical />
            <Damper x={1112.5} y={530} vertical />
            <path d="M659 878L667 884V878L659 884Z" />
            {[483, 715, 1055, 1166].map((x) => <Valve key={x} x={x} />)}
        </g>
        {SPRINKLERS.map(([x, y]) => (
            <path key={`${x}-${y}`} d={`M${x - 5} ${y - 4}l4 -2l4 1l3 5l-2 5l-4 1l-5 -3z`} />
        ))}
        {DIMENSIONS.map(([x, y, label]) => (
            <DimensionText key={`${x}-${y}`} x={x} y={y + 4}>{label}</DimensionText>
        ))}
        {VERTICAL_DIMENSIONS.map(([x, y, label]) => (
            <DimensionText key={`${x}-${y}`} $vertical transform={`translate(${x + 4} ${y}) rotate(-90)`}>{label}</DimensionText>
        ))}
    </PlanSvg>
)

const SmartViewsToolbar = () => (
    <FloatingPanel aria-label="Smart Views">
        <PanelBody>
            <Tools tools={SMART_TOOLS} />
            <MenuColumn>
                {Object.keys(MENU_ICONS).map((label) => (
                    <MenuButton key={label} type="button">
                        <svg viewBox="0 0 16 16" width="16" height="16" aria-hidden="true">{MENU_ICONS[label]}</svg>
                        {label}
                        {label !== 'Delete Views' && <Arrow $size={3} />}
                    </MenuButton>
                ))}
            </MenuColumn>
        </PanelBody>
        <PanelTitle $plain><span>Smart Views</span></PanelTitle>
    </FloatingPanel>
)

const App = () => {
    const [activeTab, setActiveTab] = useState('Systems')

    return (
        <Shell>
            <GlobalStyle />
            <Gradients />
            <TabBar>
                <FileTab type="button">File</FileTab>
                {RIBBON_TABS.map(({ label, width }) => (
                    <Tab
                        key={label}
                        type="button"
                        $width={width}
                        $active={label === activeTab}
                        onClick={() => setActiveTab(label)}
                    >
                        {label}
                    </Tab>
                ))}
            </TabBar>
            <Ribbon />
            <OptionsBar />
            <Workspace>
                <Sidebar>
                    <PropertiesPanel />
                    <ProjectBrowser />
                </Sidebar>
                <Main>
                    <DocTabs>
                        <DocTab $width={128}><button type="button"><CubeGlyph />{'{3D}'}</button></DocTab>
                        <DocTab $width={235}><button type="button"><PlanGlyph size={16} faded />Level 2 Fire sprinklers BE Matmenų</button></DocTab>
                        <DocTab $width={128} $active>
                            <button type="button"><PlanGlyph size={16} />Level 2 angos</button>
                            <CloseButton type="button" aria-label="Close view"><CloseGlyph /></CloseButton>
                        </DocTab>
                    </DocTabs>
                    <Canvas>
                        <FloorPlan />
                        <SmartViewsToolbar />
                    </Canvas>
                </Main>
            </Workspace>
        </Shell>
    )
}

const GlobalStyle = createGlobalStyle`
    * {
        box-sizing: border-box;
    }

    body {
        margin: 0;
        overflow: hidden;
        font-family: ${theme.font};
        font-size: 12px;
        line-height: 15px;
        color: ${theme.text};
        background: ${theme.chrome};
    }

    button, select {
        margin: 0;
        padding: 0;
        border: 0;
        background: none;
        color: inherit;
        font: inherit;
        white-space: nowrap;
    }
`;

const Shell = styled.div`
    display: flex;
    flex-direction: column;
    height: 100vh;
    overflow: hidden;
`;

const HiddenDefs = styled.svg`
    position: absolute;
    width: 0;
    height: 0;
`;

const IconSvg = styled.svg`
    display: block;
    flex: none;
    width: 32px;
    height: 32px;
    overflow: visible;
    fill: none;
    stroke: ${theme.ink};
`;

const Glyph = styled.svg`
    display: block;
    flex: none;
    width: ${({ $size }) => $size}px;
    height: ${({ $size }) => $size}px;
    overflow: visible;
`;

const Arrow = styled.i`
    flex: none;
    width: 0;
    height: 0;
    border: ${({ $size }) => $size}px solid transparent;
    border-top-color: #444;
    border-bottom: 0;
`;

const SideArrow = styled(Arrow)`
    margin: 0 -9px 0 3px;
`;

const TabBar = styled.nav`
    display: flex;
    flex: none;
    height: 21px;
    padding-top: 1px;
    background: ${theme.strip};
`;

const Tab = styled.button`
    flex: 0 0 ${({ $width }) => $width}px;
    min-width: 0;
    padding-bottom: 2px;
    background: ${({ $active }) => ($active ? theme.chrome : 'transparent')};
`;

const FileTab = styled(Tab)`
    flex-basis: 45px;
    margin-right: 2px;
    background: #2a7ab2;
    color: #fff;
`;

const RibbonStyled = styled.div`
    display: flex;
    flex: none;
    padding: 1px 0;
    overflow: hidden;
    border-bottom: 1px solid ${theme.line};
`;

const Panel = styled.section`
    flex: 0 0 ${({ $width }) => $width}px;
    overflow: hidden;
    border-right: 1px solid #dcdcdc;
`;

const PanelBody = styled.div`
    display: flex;
    height: 75px;
    ${({ $centered }) => $centered && css`padding: 2px 5px 1px 7px;`}
`;

const Separator = styled.span`
    flex: none;
    width: 1px;
    margin: 2px 3px 1px;
    background: #c6c6c6;
`;

const ToolButtonStyled = styled.button`
    display: flex;
    flex: 0 0 ${({ $width }) => $width}px;
    flex-direction: column;
    align-items: center;
    min-width: 0;
    padding-top: 5px;

    &:disabled {
        color: #b0b0b0;
    }
`;

const ModifyButton = styled(ToolButtonStyled)`
    flex: 1;
    padding-top: 2px;
    border: 1px solid ${theme.blue};
    background: linear-gradient(#c3dcf5, #a9cff1);
`;

const ToolLabel = styled.span`
    display: flex;
    align-items: center;
    margin-top: 3px;
`;

const ToolLine = styled.span`
    display: block;
`;

const SelectMenu = styled.button`
    display: flex;
    align-items: center;
    gap: 4px;
    height: 18px;
    padding: 0 0 1px 6px;
`;

const PanelTitle = styled.div`
    display: flex;
    align-items: center;
    height: 18px;
    padding: 0 ${({ $plain }) => ($plain ? 0 : 4)}px 1px 0;
    white-space: nowrap;

    span {
        flex: 1;
        text-align: center;
    }
`;

const LauncherButton = styled.button`
    display: flex;
    align-items: center;
    justify-content: center;
    width: 8px;
    height: 15px;
`;

const OptionsBar = styled.div`
    flex: none;
    height: 28px;
    border-bottom: 2px solid ${theme.line};
`;

const Workspace = styled.div`
    display: flex;
    flex: 1;
    min-height: 0;
`;

const Sidebar = styled.aside`
    display: flex;
    flex: 0 0 369px;
    flex-direction: column;
    border-right: 2px solid ${theme.line};

    section {
        padding: 0 2px 0 1px;
    }
`;

const TitleBar = styled.h2`
    display: flex;
    flex: none;
    align-items: center;
    justify-content: space-between;
    height: 20px;
    margin: 0;
    padding: 1px 2px 0;
    font-size: 11px;
    font-weight: 400;
`;

const CloseButton = styled.button`
    display: flex;
    padding: 0;
`;

const TypeSelector = styled.button`
    display: flex;
    align-items: center;
    width: 100%;
    padding: 2px;
    border: 1px solid ${theme.line};

    span:nth-child(2) {
        flex: 1;
        padding-left: 4px;
        text-align: left;
    }
`;

const Thumbnail = styled.span`
    display: flex;
    align-items: center;
    justify-content: center;
    width: 66px;
    height: 66px;
    border: 1px solid ${theme.line};
`;

const InstanceRow = styled.div`
    display: flex;
    gap: 6px;
    padding: 1px 0;
`;

const SelectBox = styled.div`
    display: grid;
    flex: 0 0 282px;
    align-items: center;

    > * {
        grid-area: 1 / 1;
    }

    select {
        height: 23px;
        padding-left: 3px;
        appearance: none;
        border: 1px solid #adadad;
        background: #e1e1e1;
        color: #000;
    }

    svg {
        justify-self: end;
        margin-right: 4px;
        pointer-events: none;
    }
`;

const EditType = styled.button`
    display: flex;
    align-items: center;
    gap: 4px;
    height: 20px;
    font-size: 11px;
`;

const TableArea = styled.div`
    display: grid;
    grid-template-columns: 1fr 16px;
    column-gap: 1px;
    height: 276px;

    > div:first-child {
        background: #fff;
    }
`;

const PropertyTable = styled.table`
    width: 100%;
    table-layout: fixed;
    border-spacing: 0;
    color: #000;

    .name {
        width: 168px;
    }

    .flag {
        width: 12px;
    }

    th, td {
        height: 18px;
        padding: 0;
        line-height: 16px;
        font-weight: 400;
        text-align: left;
        white-space: nowrap;
    }
`;

const PropertyRowStyled = styled.tr`
    color: ${({ $readOnly }) => ($readOnly ? theme.muted : '#000')};

    th, td {
        border-right: 1px dotted #555;
        border-bottom: 1px dotted #555;
    }

    th {
        padding-left: 8px;
    }

    td {
        padding-left: 2px;
    }
`;

const SectionCell = styled.th`
    background: #dadada;
`;

const SectionInner = styled.div`
    display: flex;
    align-items: center;
    justify-content: space-between;
    padding: 0 5px 0 2px;
`;

const CollapseButton = styled.button`
    display: flex;
`;

const ValueButton = styled.button`
    display: block;
    width: calc(100% + 1px);
    height: 16px;
    margin: 1px 0 0 -1px;
    border: 1px solid #a9a9a9;
    border-width: 1px 2px 2px 1px;
    background: #e1e1e1;
    line-height: 13px;
`;

const ScrollbarStyled = styled.div`
    display: flex;
    flex-direction: column;
    align-items: stretch;
    background: #f0f0f0;
`;

const ScrollArrow = styled.svg`
    flex: none;
    width: 15px;
    height: 17px;
    fill: none;
    stroke: #505050;
    stroke-width: 2;
`;

const Track = styled.div`
    flex: ${({ $grow }) => $grow} 0 0;
`;

const Thumb = styled(Track)`
    background: #cdcdcd;
`;

const PanelFooter = styled.div`
    display: flex;
    align-items: center;
    justify-content: space-between;
    height: 28px;
    padding: 0 2px 2px;

    a {
        color: #0066cc;
        font-size: 11px;
    }
`;

const ApplyButton = styled.button`
    width: 73px;
    height: 21px;
    border: 1px solid #bfbfbf;
    background: ${theme.line};
    color: #838383;
`;

const BrowserSection = styled.section`
    display: flex;
    flex: 1;
    flex-direction: column;
    min-height: 0;
    border-top: 2px solid ${theme.line};
`;

const TreeArea = styled.div`
    display: grid;
    flex: 1;
    grid-template-columns: 1fr 15px;
    grid-template-rows: 100%;
    min-height: 0;
`;

const Tree = styled.ul`
    margin: 0;
    padding: 0;
    overflow: hidden;
    background: #fff;
    color: #000;
    font-size: 11px;
    list-style: none;
`;

const TreeRow = styled.li`
    display: flex;
    align-items: center;
    height: 18px;
    padding-left: 8px;
`;

const Rail = styled.span`
    flex: none;
    align-self: flex-start;
    width: ${({ $width }) => $width}px;
    height: ${({ $half }) => ($half ? 10 : 18)}px;
    border-left: ${({ $line }) => ($line ? '1px dotted #909090' : 0)};
`;

const NodeMark = styled.span`
    display: flex;
    flex-direction: column;
    width: 9px;
    height: 18px;
`;

const Stem = styled.span`
    flex: 1;
    margin-left: 4px;
    border-left: ${({ $on }) => ($on ? '1px dotted #909090' : 0)};
`;

const Expander = styled.button`
    display: flex;
    height: 9px;
`;

const Dash = styled.span`
    flex: none;
    width: ${({ $width }) => $width}px;
    border-top: 1px dotted #909090;
`;

const TreeLabel = styled.span`
    padding: 0 3px;
    line-height: 18px;
    white-space: nowrap;
    ${({ $selected }) => $selected && css`
        background: #e3e3e3;
        font-weight: 700;
    `}
`;

const Main = styled.main`
    display: flex;
    flex: 1;
    flex-direction: column;
    min-width: 0;
`;

const DocTabs = styled.div`
    display: flex;
    flex: none;
    height: 20px;
    background: ${theme.strip};
    font-size: 11px;
`;

const DocTab = styled.div`
    display: flex;
    flex: 0 0 ${({ $width }) => $width}px;
    align-items: center;
    justify-content: space-between;
    padding: 1px 4px 0 5px;
    background: ${({ $active }) => ($active ? '#fff' : 'transparent')};
    color: ${({ $active }) => ($active ? theme.text : '#4c4c4c')};
    font-weight: ${({ $active }) => ($active ? 700 : 400)};

    > button {
        display: flex;
        align-items: center;
        gap: 7px;
    }
`;

const Canvas = styled.div`
    position: relative;
    flex: 1;
    overflow: hidden;
    background: #fff;
`;

const PlanSvg = styled.svg`
    display: block;
    width: 1092px;
    height: 791px;
`;

const DimensionText = styled.text`
    font-family: "Liberation Sans", Arial, sans-serif;
    font-size: ${({ $vertical }) => ($vertical ? 12 : 11)}px;
    text-anchor: middle;
    fill: #000;
    stroke: #fff;
    stroke-width: ${({ $vertical }) => ($vertical ? 3 : 0)}px;
    paint-order: stroke;
`;

const FloatingPanel = styled.section`
    position: absolute;
    top: 50px;
    left: 173px;
    width: 436px;
    border: 1px solid ${theme.line};
    background: ${theme.chrome};
    font-size: 11px;

    > div:first-child {
        padding-left: 2px;
    }
`;

const MenuColumn = styled.div`
    display: flex;
    flex-direction: column;
    justify-content: space-between;
    padding: 6px 0 4px 7px;
`;

const MenuButton = styled.button`
    display: flex;
    align-items: center;
    gap: 5px;
`;

export default App;
